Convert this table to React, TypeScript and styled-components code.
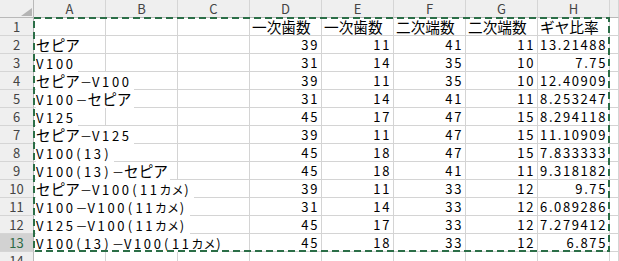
import React from 'react';
import styled, { createGlobalStyle } from 'styled-components';

const Global = createGlobalStyle`
  html, body { margin: 0; padding: 0; background: #ffffff; }
  body {
    width: 619px;
    height: 261px;
    overflow: hidden;
    font-family: "Noto Sans CJK JP", "Noto Sans", sans-serif;
    color: #000;
  }
`;

const Sheet = styled.div`
  position: relative;
  width: 619px;
  height: 261px;
  overflow: hidden;
  background: #fff;
`;

const Grid = styled.div`
  display: grid;
  grid-template-columns: 34px repeat(8, 72px) 1fr;
  grid-auto-rows: 18px;
`;

const Corner = styled.div`
  box-sizing: border-box;
  background: #efefef;
  border-right: 1px solid #b9b9b9;
  border-bottom: 1px solid #b9b9b9;
  display: flex;
  justify-content: flex-end;
  align-items: flex-end;
  padding: 0 1px 1px 0;
  &::after {
    content: '';
    width: 0;
    height: 0;
    border-left: 11px solid transparent;
    border-bottom: 8px solid #b4b4b4;
  }
`;

const ColHead = styled.div`
  box-sizing: border-box;
  background: #efefef;
  border-right: 1px solid #d5d5d5;
  border-bottom: 1px solid #b9b9b9;
  display: flex;
  align-items: center;
  justify-content: center;
  font-size: 13px;
  line-height: 17px;
  color: #444;
`;

const RowHead = styled.div<{ $active?: boolean }>`
  box-sizing: border-box;
  background: ${(p) => (p.$active ? '#d2d2d2' : '#efefef')};
  border-right: 1px solid #b9b9b9;
  border-bottom: 1px solid #d5d5d5;
  display: flex;
  align-items: center;
  justify-content: center;
  font-size: 13px;
  line-height: 17px;
  color: ${(p) => (p.$active ? '#2d6a46' : '#444')};
`;

const Cell = styled.div<{ $align?: 'left' | 'right'; $over?: boolean }>`
  box-sizing: border-box;
  border-right: 1px solid #d4d4d4;
  border-bottom: 1px solid #d4d4d4;
  display: flex;
  align-items: center;
  justify-content: ${(p) => (p.$align === 'right' ? 'flex-end' : 'flex-start')};
  padding: ${(p) => (p.$align === 'right' ? '0 2px 0 0' : '0 0 0 2px')};
  font-size: 14.67px;
  line-height: 17px;
  white-space: nowrap;
  position: ${(p) => (p.$over ? 'relative' : 'static')};
  z-index: ${(p) => (p.$over ? 1 : 'auto')};
  overflow: visible;
`;

const Overflow = styled.span`
  background: #fff;
  padding-right: 2px;
`;

const Latin = styled.span`
  font-size: 13px;
  letter-spacing: 2.6px;
`;

const Paren = styled.span`
  font-size: 13px;
  letter-spacing: 3.4px;
  margin-left: 0.6px;
`;

const Dash = styled.span`
  font-size: 12px;
`;

const SmallKana = styled.span`
  font-size: 12px;
`;

const Num = styled.span`
  font-size: 13px;
  letter-spacing: 1.6px;
`;

const Marquee = styled.svg`
  position: absolute;
  left: 33px;
  top: 17px;
  pointer-events: none;
  z-index: 5;
`;

const cols = ['A', 'B', 'C', 'D', 'E', 'F', 'G', 'H', ''];

const headers = ['一次歯数', '一次歯数', '二次端数', '二次端数', 'ギヤ比率'];

const rows: [string, number, number, number, number, string][] = [
  ['セピア', 39, 11, 41, 11, '13.21488'],
  ['V100', 31, 14, 35, 10, '7.75'],
  ['セピア－V100', 39, 11, 35, 10, '12.40909'],
  ['V100－セピア', 31, 14, 41, 11, '8.253247'],
  ['V125', 45, 17, 47, 15, '8.294118'],
  ['セピア－V125', 39, 11, 47, 15, '11.10909'],
  ['V100(13)', 45, 18, 47, 15, '7.833333'],
  ['V100(13)－セピア', 45, 18, 41, 11, '9.318182'],
  ['セピア－V100(11カメ)', 39, 11, 33, 12, '9.75'],
  ['V100－V100(11カメ)', 31, 14, 33, 12, '6.089286'],
  ['V125－V100(11カメ)', 45, 17, 33, 12, '7.279412'],
  ['V100(13)－V100(11カメ)', 45, 18, 33, 12, '6.875'],
];

function renderLabel(text: string) {
  const parts = text.split(/([A-Za-z0-9]+|[()]|カメ|－)/).filter((s) => s.length > 0);
  return parts.map((p, i) => {
    if (/^[A-Za-z0-9]+$/.test(p)) return <Latin key={i}>{p}</Latin>;
    if (p === '(' || p === ')') return <Paren key={i}>{p}</Paren>;
    if (p === '－') return <Dash key={i}>{p}</Dash>;
    if (p === 'カメ') return <SmallKana key={i}>{p}</SmallKana>;
    return <React.Fragment key={i}>{p}</React.Fragment>;
  });
}

export default function App() {
  return (
    <>
      <Global />
      <Sheet>
        <Grid>
          <Corner />
          {cols.map((c, i) => (
            <ColHead key={i}>{c}</ColHead>
          ))}

          <RowHead>1</RowHead>
          <Cell />
          <Cell />
          <Cell />
          {headers.map((h, i) => (
            <Cell key={i}>{h}</Cell>
          ))}
          <Cell />

          {rows.map((r, i) => (
            <React.Fragment key={i}>
              <RowHead $active={i === rows.length - 1}>{i + 2}</RowHead>
              <Cell $over>
                <Overflow>{renderLabel(r[0])}</Overflow>
              </Cell>
              <Cell />
              <Cell />
              {r.slice(1).map((v, j) => (
                <Cell key={j} $align="right">
                  <Num>{v}</Num>
                </Cell>
              ))}
              <Cell />
            </React.Fragment>
          ))}

          <RowHead>14</RowHead>
          {cols.map((_, i) => (
            <Cell key={i} />
          ))}
        </Grid>
        <Marquee width={577} height={235} viewBox="0 0 577 235">
          <rect
            x={1}
            y={1}
            width={575}
            height={233}
            fill="none"
            stroke="#2b6e47"
            strokeWidth={2}
            strokeDasharray="7 4"
          />
        </Marquee>
      </Sheet>
    </>
  );
}
